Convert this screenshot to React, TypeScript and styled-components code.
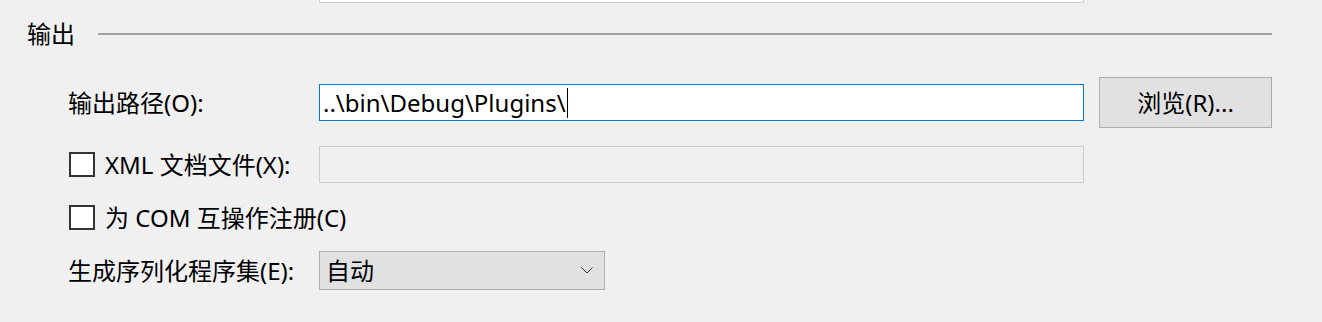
import * as React from 'react'
import styled, { createGlobalStyle } from 'styled-components'

const GlobalStyle = createGlobalStyle`
  html, body {
    margin: 0;
    padding: 0;
    background: #f0f0f0;
  }
  body {
    font-family: 'Noto Sans', 'Noto Sans CJK SC', sans-serif;
    color: #000;
  }
`

const labelCol = 251
const fieldWidth = 765

const Page = styled.div`
  width: 1322px;
  height: 322px;
  overflow: hidden;
  background: #f0f0f0;
  font-size: 24px;
  line-height: 1;
`

const TopStub = styled.div`
  margin-left: 319px;
  width: ${fieldWidth}px;
  height: 3px;
  box-sizing: border-box;
  background: #fff;
  border: 1px solid #cfcfcf;
  border-top: none;
`

const SectionHeader = styled.div`
  display: flex;
  align-items: center;
  gap: 23px;
  margin-top: 19px;
  padding: 0 50px 0 27px;
  height: 24px;
`

const SectionRule = styled.div`
  flex: 1;
  height: 0;
  border-top: 2px solid #a0a0a0;
`

const Form = styled.div`
  display: flex;
  flex-direction: column;
  padding-left: 68px;
`

const Row = styled.div<{ $top: number; $height: number }>`
  display: grid;
  grid-template-columns: ${labelCol}px ${fieldWidth}px 188px;
  align-items: center;
  margin-top: ${p => p.$top}px;
  height: ${p => p.$height}px;
`

const Label = styled.span`
  white-space: nowrap;
`

const TextInput = styled.div<{ $disabled?: boolean }>`
  box-sizing: border-box;
  height: 37px;
  display: flex;
  align-items: center;
  padding-left: 3px;
  background: ${p => (p.$disabled ? '#f0f0f0' : '#fff')};
  border: 1px solid ${p => (p.$disabled ? '#cccccc' : '#0078d7')};
  white-space: nowrap;
`

const Caret = styled.span`
  display: inline-block;
  width: 1px;
  height: 30px;
  margin-left: 1px;
  background: #000;
`

const Button = styled.div`
  box-sizing: border-box;
  height: 51px;
  margin-left: 15px;
  display: flex;
  align-items: center;
  justify-content: center;
  background: #e1e1e1;
  border: 1px solid #adadad;
`

const CheckLabel = styled.label<{ $wide?: boolean }>`
  grid-column: ${p => (p.$wide ? '1 / span 2' : 'auto')};
  display: flex;
  align-items: center;
  gap: 10px;
  white-space: nowrap;
`

const CheckBox = styled.span`
  box-sizing: border-box;
  width: 26px;
  height: 25px;
  margin-left: 1px;
  border: 2px solid #333;
  background: #fff;
`

const Select = styled.div`
  box-sizing: border-box;
  width: 286px;
  height: 39px;
  display: flex;
  align-items: center;
  justify-content: space-between;
  padding: 0 11px 0 6px;
  background: #e1e1e1;
  border: 1px solid #adadad;
`

const Chevron = () => (
  <svg width="12" height="7" viewBox="0 0 12 7">
    <path d="M0.5 0.5 L6 6 L11.5 0.5" fill="none" stroke="#333" strokeWidth="1" />
  </svg>
)

const App: React.FC = () => {
  return (
    <Page>
      <GlobalStyle />
      <TopStub />
      <SectionHeader>
        <span>输出</span>
        <SectionRule />
      </SectionHeader>
      <Form>
        <Row $top={31} $height={51}>
          <Label>输出路径(O):</Label>
          <TextInput>
            ..\bin\Debug\Plugins\
            <Caret />
          </TextInput>
          <Button>浏览(R)...</Button>
        </Row>
        <Row $top={18} $height={37}>
          <CheckLabel>
            <CheckBox />
            XML 文档文件(X):
          </CheckLabel>
          <TextInput $disabled />
        </Row>
        <Row $top={22} $height={25}>
          <CheckLabel $wide>
            <CheckBox />
            为 COM 互操作注册(C)
          </CheckLabel>
        </Row>
        <Row $top={21} $height={39}>
          <Label>生成序列化程序集(E):</Label>
          <Select>
            自动
            <Chevron />
          </Select>
        </Row>
      </Form>
    </Page>
  )
}

export default App
